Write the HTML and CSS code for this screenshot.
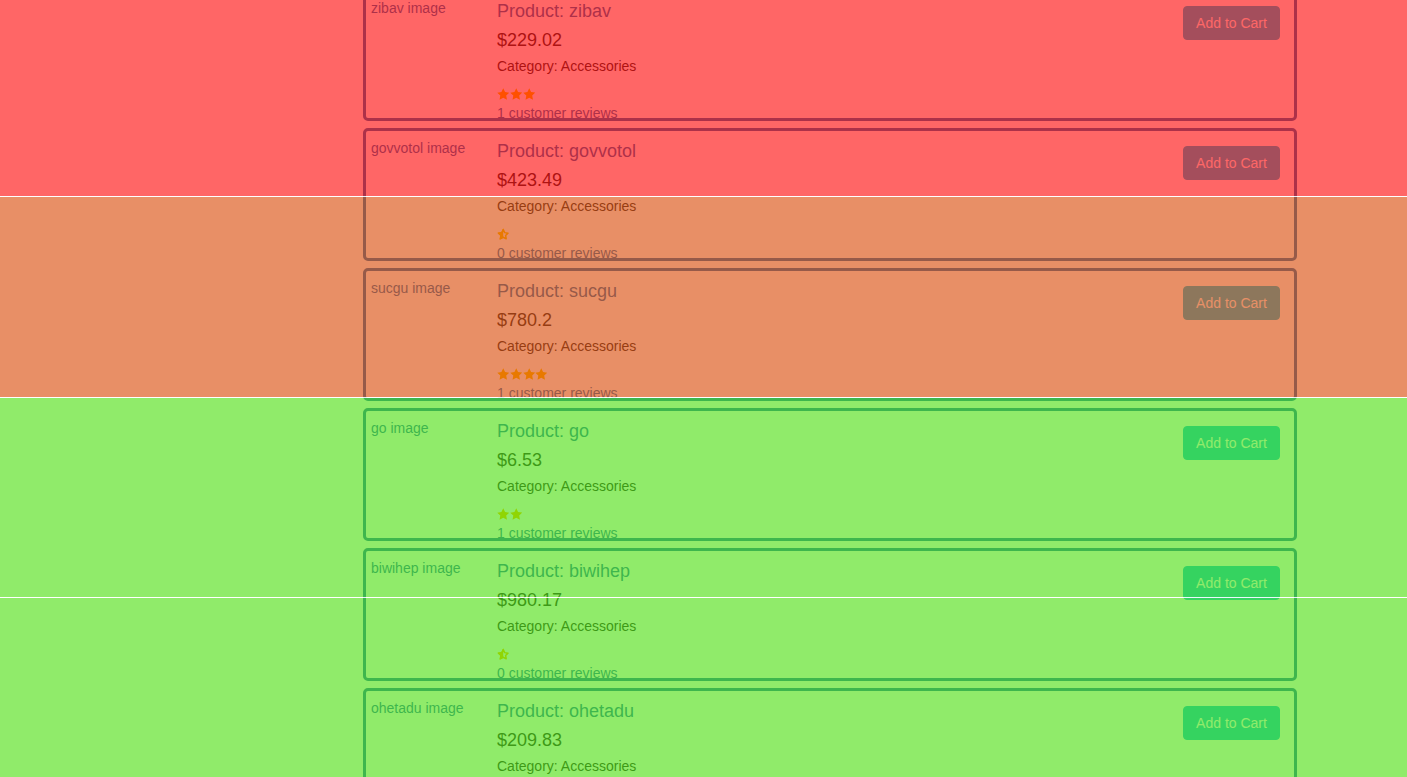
FILE: index.html
```html
<!DOCTYPE html>
<html lang="en">
<head>
<meta charset="utf-8">
<title>Products</title>
<link rel="stylesheet" href="styles.css">
</head>
<body>
<svg width="0" height="0" class="defs" aria-hidden="true">
  <defs>
    <symbol id="star-full" viewBox="1 1 22 21">
      <polygon points="12,1.5 15.2,8.1 22.5,9.1 17.2,14.2 18.5,21.5 12,18 5.5,21.5 6.8,14.2 1.5,9.1 8.8,8.1" fill="currentColor"/>
    </symbol>
    <symbol id="star-half" viewBox="1 1 22 21">
      <polygon points="12,3.6 14.5,9.1 20.4,10 16.1,14.1 17.2,20 12,17.2 6.8,20 7.9,14.1 3.6,10 9.5,9.1" fill="none" stroke="currentColor" stroke-width="2.6" stroke-linejoin="round"/>
      <polygon points="12,1.5 12,18 5.5,21.5 6.8,14.2 1.5,9.1 8.8,8.1" fill="currentColor"/>
    </symbol>
  </defs>
</svg>

<div class="layout">
  <aside class="side"></aside>
  <main class="products">

    <article class="card">
      <div class="thumb">zibav image</div>
      <div class="info">
        <h4 class="title">Product: zibav</h4>
        <div class="price">$229.02</div>
        <div class="category">Category: Accessories</div>
        <div class="stars">
          <svg class="star"><use href="#star-full"/></svg>
          <svg class="star"><use href="#star-full"/></svg>
          <svg class="star"><use href="#star-full"/></svg>
        </div>
        <div class="reviews">1 customer reviews</div>
      </div>
      <button class="cart">Add to Cart</button>
    </article>

    <article class="card">
      <div class="thumb">govvotol image</div>
      <div class="info">
        <h4 class="title">Product: govvotol</h4>
        <div class="price">$423.49</div>
        <div class="category">Category: Accessories</div>
        <div class="stars">
          <svg class="star"><use href="#star-half"/></svg>
        </div>
        <div class="reviews">0 customer reviews</div>
      </div>
      <button class="cart">Add to Cart</button>
    </article>

    <article class="card">
      <div class="thumb">sucgu image</div>
      <div class="info">
        <h4 class="title">Product: sucgu</h4>
        <div class="price">$780.2</div>
        <div class="category">Category: Accessories</div>
        <div class="stars">
          <svg class="star"><use href="#star-full"/></svg>
          <svg class="star"><use href="#star-full"/></svg>
          <svg class="star"><use href="#star-full"/></svg>
          <svg class="star"><use href="#star-full"/></svg>
        </div>
        <div class="reviews">1 customer reviews</div>
      </div>
      <button class="cart">Add to Cart</button>
    </article>

    <article class="card">
      <div class="thumb">go image</div>
      <div class="info">
        <h4 class="title">Product: go</h4>
        <div class="price">$6.53</div>
        <div class="category">Category: Accessories</div>
        <div class="stars">
          <svg class="star"><use href="#star-full"/></svg>
          <svg class="star"><use href="#star-full"/></svg>
        </div>
        <div class="reviews">1 customer reviews</div>
      </div>
      <button class="cart">Add to Cart</button>
    </article>

    <article class="card">
      <div class="thumb">biwihep image</div>
      <div class="info">
        <h4 class="title">Product: biwihep</h4>
        <div class="price">$980.17</div>
        <div class="category">Category: Accessories</div>
        <div class="stars">
          <svg class="star"><use href="#star-half"/></svg>
        </div>
        <div class="reviews">0 customer reviews</div>
      </div>
      <button class="cart">Add to Cart</button>
    </article>

    <article class="card">
      <div class="thumb">ohetadu image</div>
      <div class="info">
        <h4 class="title">Product: ohetadu</h4>
        <div class="price">$209.83</div>
        <div class="category">Category: Accessories</div>
        <div class="stars">
          <svg class="star"><use href="#star-full"/></svg>
          <svg class="star"><use href="#star-full"/></svg>
        </div>
        <div class="reviews">1 customer reviews</div>
      </div>
      <button class="cart">Add to Cart</button>
    </article>

  </main>
</div>

<div class="overlay" aria-hidden="true">
  <div class="band band-red"></div>
  <div class="band band-orange"></div>
  <div class="band band-green band-a"></div>
  <div class="band band-green band-b"></div>
</div>
</body>
</html>
```

FILE: styles.css
```css
html, body {
  margin: 0;
  padding: 0;
  background: #ffffff;
  overflow: hidden;
}

body {
  font-family: "Liberation Sans", Arial, Helvetica, sans-serif;
  font-size: 14px;
  line-height: 20px;
  color: #333333;
}

.defs {
  position: absolute;
  width: 0;
  height: 0;
}

.layout {
  display: grid;
  grid-template-columns: 363px 934px;
}

.products {
  margin-top: -12px;
  display: flex;
  flex-direction: column;
  gap: 7px;
}

.card {
  box-sizing: border-box;
  height: 133px;
  border: 3px solid #337ab7;
  border-radius: 5px;
  display: flex;
  align-items: flex-start;
  padding: 0 14px 0 5px;
}

.thumb {
  width: 126px;
  flex: none;
  margin-top: 7px;
  color: #337ab7;
  font-size: 14px;
  line-height: 20px;
}

.info {
  flex: 1;
  padding-top: 10px;
  display: flex;
  flex-direction: column;
}

.title {
  margin: 0;
  font-size: 18px;
  line-height: 20px;
  font-weight: normal;
  color: #337ab7;
}

.price {
  margin-top: 9px;
  font-size: 18px;
  line-height: 20px;
  color: #333333;
}

.category {
  margin-top: 6px;
  font-size: 14px;
  line-height: 20px;
  color: #333333;
}

.stars {
  margin-top: 12px;
  height: 12px;
  display: flex;
  gap: 0.3px;
  color: #ffc800;
}

.star {
  width: 12.5px;
  height: 12px;
  flex: none;
}

.reviews {
  margin-top: 3px;
  font-size: 14px;
  line-height: 20px;
  color: #337ab7;
}

.cart {
  flex: none;
  margin-top: 15px;
  width: 97px;
  height: 34px;
  border: 1px solid #1cc4e6;
  border-radius: 4px;
  background: #1cc4e6;
  color: #ffffff;
  font-family: "Liberation Sans", Arial, Helvetica, sans-serif;
  font-size: 14px;
  line-height: 20px;
  padding: 6px 0;
  text-align: center;
}

/* translucent highlight bands laid over the page */
.overlay {
  position: fixed;
  inset: 0;
  display: flex;
  flex-direction: column;
  pointer-events: none;
}

.band {
  flex: none;
  background-clip: padding-box;
}

.band-red {
  height: 196px;
  background-color: rgba(255, 0, 0, 0.6);
}

.band-orange {
  height: 200px;
  border-top: 1px solid rgba(255, 255, 255, 0.9);
  background-color: rgba(217, 68, 0, 0.6);
  background-clip: padding-box;
}

.band-green {
  background-color: rgba(70, 222, 7, 0.6);
  border-top: 1px solid rgba(255, 255, 255, 0.9);
  background-clip: padding-box;
}

.band-a {
  height: 199px;
}

.band-b {
  flex: 1;
}
```
